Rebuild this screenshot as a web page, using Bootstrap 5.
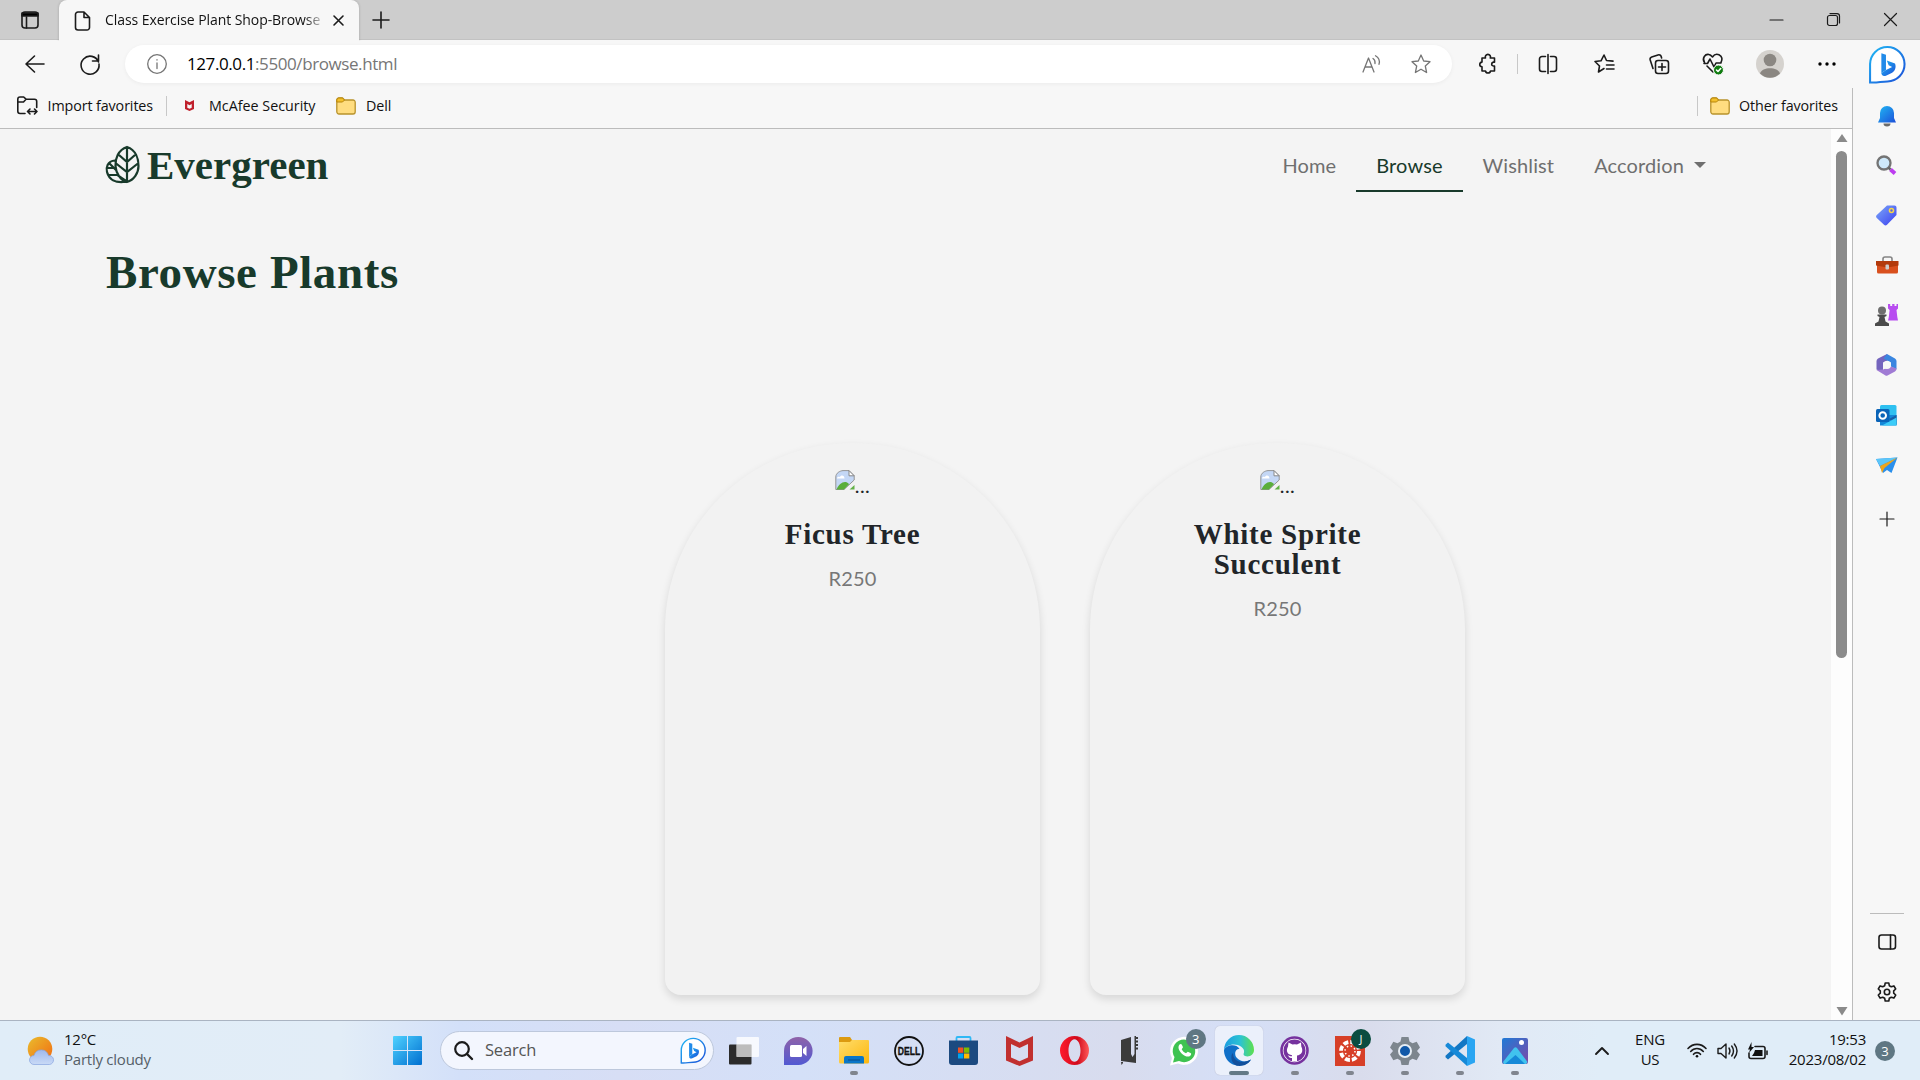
<!DOCTYPE html>
<html lang="en">
<head>
<meta charset="utf-8">
<title>Class Exercise Plant Shop-Browse</title>
<link href="https://cdn.jsdelivr.net/npm/bootstrap@5.3.0/dist/css/bootstrap.min.css" rel="stylesheet">
<script src="https://cdn.jsdelivr.net/npm/bootstrap@5.3.0/dist/js/bootstrap.bundle.min.js"></script>
<style>
body{width:1920px;height:1080px;overflow:hidden;background:#f7f7f7;font-family:"Open Sans","Noto Sans",sans-serif;color:#111;font-size:14.3px}
svg{display:block;flex:none;overflow:visible}
.ln{fill:none;stroke:#1b1b1b;stroke-width:1.6;stroke-linecap:round;stroke-linejoin:round}
.thin{stroke-width:1.2}
.gy{stroke:#757575;stroke-width:1.3}
.cell{display:flex;align-items:center;justify-content:center;flex:none}
.titlebar{height:40px;background:#cdcdcd;border-bottom:1px solid #c2c2c2}
.c40{width:40px}.c44{width:44px}.c54{width:54px}.c55w{width:55px}.c56{width:56px}.c57{width:57px}.c59{width:59px}.c63{width:63px}.c70{width:70px}
.c55{width:55.1px;height:60px;position:relative}
.tab-on{width:300px;height:41px;background:#f7f7f7;border-radius:8px 8px 0 0;padding-left:15px;margin-bottom:-1px;align-self:flex-start;box-shadow:0 0 3px #0003;clip-path:inset(0 -3px 0 -3px)}
.tab-text{width:224px;margin-left:14px;white-space:nowrap;letter-spacing:-.07px;-webkit-mask-image:linear-gradient(90deg,#000 89%,transparent 99%);font-size:14px;margin-top:-2px}
.win-ctl{margin-right:1px}
.toolbar{height:48px}
.pill{width:1327px;height:38px;border-radius:19px;background:#fff;box-shadow:0 1px 4px #0000000d;padding-left:22px;padding-right:21px;margin-left:15px}
.url{font-size:17px;letter-spacing:-.41px;margin-left:20px;color:#767676}
.url b{font-weight:400;color:#000}
.vsep{width:1px;height:20px;background:#c8c8c8;flex:none}
.favs{height:41px;border-bottom:1px solid #bcbcbc;width:1853px;border-right:1px solid #bcbcbc;padding:0 14px 5px 17px}
.favs span{white-space:nowrap;letter-spacing:-.1px}
.page-area{height:891px}
.viewport{width:1831px;background:#f4f4f4;padding:0 106px;font-family:Lato,sans-serif}
.scroller{width:22px;background:#fdfdfd;border-right:1px solid #bcbcbc}
.thumb{width:11px;height:507px;border-radius:6px;background:#8b8b8b;margin-top:8px}
.serif{font-family:"Liberation Serif",serif;font-weight:700}
.brand{font-size:41px;color:#183a2b;line-height:1;letter-spacing:0;margin-left:7px}
.site-nav{height:72px}
.site-nav .nav{margin-right:-1px}
.site-nav .nav-link{font-size:20px;letter-spacing:.12px;color:#6f6f6f;padding:10px 20px 9px;line-height:32px;border-bottom:2px solid transparent;font-weight:400}
.site-nav .nav-link.active{color:#183a2b;border-color:#183a2b}
.site-nav .dropdown-toggle::after{margin-left:10px;vertical-align:5px;border-top-width:6px;border-left-width:6px;border-right-width:6px}
.heading{font-size:47px;color:#183a2b;line-height:56px;margin:43px 0 0;letter-spacing:.6px}
.plants{margin:143px 0 0 559px;gap:50px}
.plant{width:375px;height:552px;background:#f2f2f2;border:0;border-radius:187px 187px 16px 16px;box-shadow:0 4px 8px rgba(0,0,0,.12);padding-top:27px;color:#212529}
.plant h5{font-size:29px;line-height:30px;margin:27px 0 16px;letter-spacing:.75px;padding:0 80px}
.alt{font-size:20px;height:22px}
.alt span{line-height:30px;letter-spacing:.5px}
.price{font-size:20px;line-height:26px;color:#777;letter-spacing:.15px}
.side{width:67px;background:#f7f7f7}
.side .s50{width:67px;height:50px}
.side .bell{height:52px;padding-top:4px}
.side .plus{height:58px}
.hr-s{width:34px;height:1px;background:#bcbcbc}
.taskbar{height:60px;border-top:1px solid #aab4c2;background:linear-gradient(90deg,#e0edf8 0,#e2edf7 340px,#d3e0f9 460px,#d7def5 620px,#d4e0f8 800px,#d8dcee 1120px,#d5dff7 1240px,#d9dcec 1360px,#e1e9f5 1500px,#e0edf8 1600px)}
.search{width:274px;height:39px;border-radius:20px;background:#f3f6fe;border:1px solid #bdc8dc;padding:0 7px 0 13px;margin-left:18px;margin-right:2px}
.search span{font-size:16.5px;color:#555;letter-spacing:-.2px}
.run{position:absolute;bottom:6px;left:24px;width:8px;height:4px;border-radius:2px;background:#80858e}
.edge-on{position:absolute;left:3px;top:5px;width:48px;height:49px;border-radius:5px;background:#ebf0fb;box-shadow:0 0 1px #aab}
.run.wide{left:17px;width:20px;background:#647986}
.bub{border-radius:50%;background:#5f7783;color:#fff;width:20px;height:20px;font-size:13px;line-height:20px;text-align:center;flex:none}
.bub.up{position:absolute;left:29px;top:8px}
.bub.jay{background:#0a4d40;font-size:11px}
.w-lines{font-size:15px;line-height:20px;letter-spacing:-.24px;padding-bottom:3px}
.w-lines.weather{margin-left:8px;width:329px}
.w-lines .sub{color:#555f68}
.tray{padding-right:25px}
</style>
</head>
<body>
<svg width="0" height="0" class="position-absolute">
<defs>
<linearGradient id="gb" x1="0" y1="0" x2="1" y2="1"><stop offset="0" stop-color="#20b8f4"/><stop offset="1" stop-color="#1c4fd8"/></linearGradient>
<linearGradient id="gw" x1="0" y1="0" x2="1" y2="1"><stop offset="0" stop-color="#4fd2ff"/><stop offset="1" stop-color="#006fd0"/></linearGradient>
<linearGradient id="gf" x1="0" y1="0" x2="1" y2="1"><stop offset="0" stop-color="#ffdd6b"/><stop offset="1" stop-color="#fcb70e"/></linearGradient>
<linearGradient id="gs" x1="0" y1="0" x2="1" y2="1"><stop offset="0" stop-color="#e9bd2d"/><stop offset="1" stop-color="#f26b12"/></linearGradient>
<linearGradient id="gv" x1="0" y1="0" x2="0" y2="1"><stop offset="0" stop-color="#8f62a8"/><stop offset="1" stop-color="#5159d2"/></linearGradient>
<linearGradient id="gc" x1="0" y1="0" x2="0" y2="1"><stop offset="0" stop-color="#9fb9ec"/><stop offset="1" stop-color="#c9daf6"/></linearGradient>
<linearGradient id="gp" x1="0" y1="0" x2="1" y2="1"><stop offset="0" stop-color="#1f7ad6"/><stop offset="1" stop-color="#7d4aa8"/></linearGradient>
<linearGradient id="ge" x1="0" y1="0" x2="1" y2="0"><stop offset="0" stop-color="#1b9de2"/><stop offset=".55" stop-color="#2cc3d2"/><stop offset="1" stop-color="#5ee04c"/></linearGradient>
<linearGradient id="gt" x1="0" y1="0" x2="1" y2="1"><stop offset="0" stop-color="#7ba8f8"/><stop offset="1" stop-color="#3c3ff0"/></linearGradient>
<linearGradient id="gr" x1="0" y1="0" x2="1" y2="0"><stop offset="0" stop-color="#ff1b2d"/><stop offset=".6" stop-color="#d00a1c"/><stop offset="1" stop-color="#ff5a5a"/></linearGradient>
<symbol id="folder" viewBox="0 0 20 18"><path d="M.8 3a2 2 0 0 1 2-2h3.700l2 2H17a2.200 2.200 0 0 1 2.200 2.200v9.600A2.200 2.200 0 0 1 17 17H3a2.200 2.200 0 0 1-2.200-2.200z" fill="#ffdd80" stroke="#b8922b" stroke-width="1.300"/><path d="M.8 3a2 2 0 0 1 2-2h3.700l2 2-2 2H.8z" fill="#f3c02c" stroke="#b8860b" stroke-width="1"/></symbol>
<symbol id="bing" viewBox="0 0 36 38"><path d="M1.500 36.500V18.500A16.800 16.800 0 1 1 18.500 35.500C12 35.500 9 37 1.500 36.500z" fill="#fff" stroke="url(#gb)" stroke-width="2"/><path d="M12.500 8l4.500 1.600v14.800l-4.500 3z" fill="#218be9"/><path d="M12.500 27.400l4.500-3 6-3-3.400-1.600-1.800-4.800 8 3c1.600 4-.3 7.500-2.800 9L17 30c-3 1-4.500-.7-4.500-2.600z" fill="url(#gb)"/></symbol>
<symbol id="broken" viewBox="0 0 20 20"><path d="M.8 19.500V7C.8 3 5 .8 8 .6l6 0 5.200 5.200V10L9 19.500z" fill="#c4d7f5" stroke="#949494"/><path d="M14 .6v5.200h5.200z" fill="#fff" stroke="#888"/><path d="M2 8.500c0-2 2-2 2.700-1.400C6 4.500 9.500 5 9.500 8.500z" fill="#fff"/><path d="M1.500 19.500C4 14 8 11 12 12.500c1 .5 1.700 1 2 1.700L9 19.500z" fill="#5aae3b"/><path d="M14.500 19.500l5-4.500v4.500z" fill="#63b146"/></symbol>
</defs></svg>

<header class="titlebar d-flex align-items-center">
 <div class="cell c59"><svg width="18" height="18" class="ln"><rect x="1" y="1" width="16" height="16" rx="3"/><path d="M1 2h16v3H1z" fill="#000"/><path d="M5.500 6v11"/></svg></div>
 <div class="tab-on d-flex align-items-center">
  <svg width="17" height="20" class="ln"><path d="M4 1h6l5.500 5.500V16.500a2.500 2.500 0 0 1-2.500 2.500H4a2.500 2.500 0 0 1-2.500-2.500v-13A2.500 2.500 0 0 1 4 1zM10 1v5.500h5.500"/></svg>
  <div class="tab-text">Class Exercise Plant Shop-Browse</div>
  <svg width="11" height="11" class="ln ms-1"><path d="M1 1l9 9M10 1l-9 9"/></svg>
 </div>
 <div class="cell c44"><svg width="18" height="18" class="ln"><path d="M9 1v16M1 9h16"/></svg></div>
 <div class="win-ctl ms-auto d-flex">
  <div class="cell c57"><svg width="13" height="13" class="ln thin"><path d="M0 7h13"/></svg></div>
  <div class="cell c57"><svg width="13" height="13" class="ln thin"><rect x=".5" y="2.500" width="10" height="10" rx="2"/><path d="M3 .6h7a2.500 2.500 0 0 1 2.500 2.500V10"/></svg></div>
  <div class="cell c57"><svg width="13" height="13" class="ln thin"><path d="M.5.5l12 12M12.500.5l-12 12"/></svg></div>
 </div>
</header>

<div class="toolbar d-flex align-items-center">
 <div class="cell c70"><svg width="20" height="18" class="ln"><path d="M19 9H1M9.500 1L1 9l8.500 8"/></svg></div>
 <div class="cell c40"><svg width="20" height="20" class="ln"><path d="M18.500 8A9 9 0 1 0 19 10M18.500 1v6h-6"/></svg></div>
 <div class="pill d-flex align-items-center">
  <svg width="20" height="20" class="ln gy"><circle cx="10" cy="10" r="9.300"/><path d="M10 9v5.500M10 5.700v.4"/></svg>
  <div class="url"><b>127.0.0.1</b>:5500/browse.html</div>
  <svg width="20" height="18" class="ln gy ms-auto"><path d="M1 17L6.500 3 12 17M3 12h7M11 3.500c1.600 1 2.300 2.500 2 5M13.500.8c3.500 2 4.500 5 3.500 8.500"/></svg>
  <svg width="20" height="20" class="ln gy" style="margin-left:29px"><path d="M10 1l2.700 6 6.300.7-4.700 4.300 1.300 6.500-5.600-3.300-5.600 3.300L5.700 12 1 7.700 7.300 7z"/></svg>
 </div>
 <div class="cell c63 ms-1"><svg width="18" height="20" class="ln"><path d="M3 4h3.500a2.600 2.600 0 1 1 4.800 0H15.500v4.300c-3.200-1-4.300 4.200 0 3.800V17h-4c-.5 2.700-4.500 2.700-5 0H3v-4.200c-3-.2-3-4.400 0-4.700z"/></svg></div>
 <div class="vsep" style="margin-left:-2px"></div>
 <div class="cell c59"><svg width="20" height="20" class="ln"><path d="M7.500 2.500H4a2.500 2.500 0 0 0-2.500 2.500v10A2.500 2.500 0 0 0 4 17.500h3.500M12.500 2.500H16a2.500 2.500 0 0 1 2.500 2.500v10a2.500 2.500 0 0 1-2.500 2.500h-3.500M10 .5v19"/></svg></div>
 <div class="cell c54"><svg width="20" height="20" class="ln"><path d="M10 14.500L4.500 18l1-6L1 7.500l6-.7L10 1l2.500 5.500 6.500.6M12.500 11H20M12.500 15H20"/></svg></div>
 <div class="cell c55w"><svg width="20" height="20" class="ln"><rect x="6.500" y="6.500" width="13" height="13" rx="2.500"/><path d="M13 9.500v7M9.500 13h7M4 14.500L1.200 6a2.500 2.500 0 0 1 1.500-3L9 .9a2.500 2.500 0 0 1 3.200 1.600l.4 1.500"/></svg></div>
 <div class="cell c54"><svg width="22" height="22" class="ln"><path d="M2.500 9.500C-.5 5 3.500.5 7 1.500c2 .5 3 2 3.500 2.500C11.500 2.500 14 .5 17 1.700c3.500 1.600 3.500 5 2 7.800M2 10.500h3.500L8 6l4 8 2-4h5M5 13l6 6"/><circle cx="16.500" cy="17" r="5" fill="#107c10" stroke="#f7f7f7" stroke-width="1"/><path d="M14.500 17l1.500 1.500 2.700-3" stroke="#fff"/></svg></div>
 <div class="cell c59"><svg width="28" height="28"><circle cx="14" cy="14" r="14" fill="#d5d2ce"/><circle cx="14" cy="10" r="6.300" fill="#8b8782"/><path d="M4 23.500c2-7 18-7 20 0a14 14 0 0 1-20 0z" fill="#8b8782"/></svg></div>
 <div class="cell c56"><svg width="18" height="4"><circle cx="2" cy="2" r="1.700"/><circle cx="9" cy="2" r="1.700"/><circle cx="16" cy="2" r="1.700"/></svg></div>
 <div class="cell c63"><svg width="38" height="39"><use href="#bing"/></svg></div>
</div>

<div class="d-flex">
<div>
<div class="favs d-flex align-items-center">
 <svg width="21" height="19" class="ln"><path d="M8 17.500H3A2.200 2.200 0 0 1 .8 15.300V3.200A2.200 2.200 0 0 1 3 1h3.700l2.300 2.200h8.500a2.200 2.200 0 0 1 2.200 2.200v6M.8 6H6.500l2.500-2.800M10.500 15.500h9.500M13 13l-2.500 2.500L13 18M17.500 13l2.500 2.500-2.500 2.500"/></svg>
 <span style="margin-left:9.500px;width:118.500px">Import favorites</span><div class="vsep"></div>
 <svg width="9" height="11" style="margin-left:18px"><path d="M0 0l4.500 2.300L9 0v9L4.500 11 0 9zM2.300 4v3.700l2.200 1 2.200-1V4L4.500 5.200z" fill="#c0202c" fill-rule="evenodd"/></svg>
 <span style="margin-left:15px;width:127px;letter-spacing:0">McAfee Security</span>
 <svg width="20" height="18"><use href="#folder"/></svg><span style="margin-left:10px">Dell</span>
 <div class="vsep ms-auto"></div><svg width="20" height="18" style="margin-left:12px"><use href="#folder"/></svg><span style="margin-left:9px">Other favorites</span>
</div>

<div class="page-area d-flex">
<main class="viewport">
 <nav class="site-nav d-flex align-items-center">
  <svg width="34" height="38" fill="none" stroke="#183a2b" stroke-width="2.200"><path d="M21 1C12 4 9 13 9.500 20S14 34 21 36c7-2 11.500-9 11.500-16S30 4 21 1zM21 1v35M13 9l8 7 8-7M9.500 17L21 26l11.500-9M9 14.500C1 15 0 22 1 26c2 8 9 10.500 16 10h4M1 22h8.500M3 17l7 7M3 29h8.500l8.500 6"/></svg>
  <div class="brand serif">Evergreen</div>
  <div class="nav ms-auto">
   <a class="nav-link">Home</a><a class="nav-link active">Browse</a><a class="nav-link">Wishlist</a><a class="nav-link dropdown-toggle">Accordion</a>
  </div>
 </nav>
 <h1 class="heading serif">Browse Plants</h1>
 <div class="plants d-flex">
  <div class="plant card text-center">
   <div class="alt d-flex justify-content-center"><svg width="20" height="20"><use href="#broken"/></svg><span>...</span></div>
   <h5 class="serif">Ficus Tree</h5><div class="price">R250</div>
  </div>
  <div class="plant card text-center">
   <div class="alt d-flex justify-content-center"><svg width="20" height="20"><use href="#broken"/></svg><span>...</span></div>
   <h5 class="serif">White Sprite Succulent</h5><div class="price">R250</div>
  </div>
 </div>
</main>
<div class="scroller d-flex flex-column align-items-center">
 <svg width="12" height="10" style="margin-top:4px"><path d="M6 1L11.500 9H.5z" fill="#8b8b8b"/></svg>
 <div class="thumb"></div>
 <svg width="12" height="10" class="mt-auto mb-1"><path d="M6 9.500L11.500 1H.5z" fill="#8b8b8b"/></svg>
</div>
</div>
</div>

<aside class="side d-flex flex-column align-items-center">
 <div class="cell s50 bell"><svg width="20" height="21"><path d="M10 0a7 7 0 0 1 7 7v5l2 4.500H1L3 12V7a7 7 0 0 1 7-7z" fill="url(#gb)"/><path d="M6.500 17.500h7a3.500 3 0 0 1-7 0z" fill="#6b6b6b"/></svg></div>
 <div class="cell s50"><svg width="21" height="21"><circle cx="8" cy="8" r="6.500" fill="#cfe9fa" stroke="#747474" stroke-width="2.300"/><path d="M14.500 14.500L19 18.500" stroke="#bd3df0" stroke-width="4"/><path d="M12.500 12.500l2 2" stroke="#666" stroke-width="2.500"/></svg></div>
 <div class="cell s50"><svg width="21" height="21"><path d="M11 .5h7.500a2 2 0 0 1 2 2V10L11 19.800c-1 1-2 1-3 0L.8 13c-1-1-1-2 0-3z" fill="url(#gt)"/><circle cx="15.500" cy="5.500" r="2" fill="#5a66e0" stroke="#f7d548" stroke-width="1.600"/></svg></div>
 <div class="cell s50"><svg width="22" height="18"><path d="M7 5V3a2 2 0 0 1 2-2h5a2 2 0 0 1 2 2v2" fill="none" stroke="#858585" stroke-width="1.600"/><rect x="1" y="5" width="21" height="12.500" rx="1.500" fill="#d9501e"/><path d="M0 5h22.500v4.500l-8 1.500h-6L0 9.500z" fill="#b33a0c"/><rect x="9.500" y="8.500" width="3.500" height="5" rx="1" fill="#ccc"/></svg></div>
 <div class="cell s50"><svg width="23" height="23"><path d="M13 0h2.200v2h2V0h2.300v2h2V0H23v4.500l-1.500 1.500.8 7 .7 3.500H13l.8-3.500.8-7L13 4.500z" fill="#b84df0"/><circle cx="7" cy="6.500" r="4" fill="#6e6e6e"/><path d="M2.500 10.500h9V12l-2 1 1 4.500 3.500 2V22H0v-2.500l3.500-2 1-4.500-2-1z" fill="#4b4b4b"/></svg></div>
 <div class="cell s50"><svg width="21" height="22"><path d="M11 0L2 4.500Q.5 5.500.5 7v8.500L7 18V8.500L12.500 6z" fill="#7464bd"/><path d="M11 0L19 4.500Q20.500 5.500 20.500 7v8.500L15 12.500V8.500L7.500 4.500z" fill="#3a86e0"/><path d="M20.500 14.500Q20.500 16.500 19 17.500L11.500 21.500Q10.500 22 9.500 21.500L.5 16l6.500-.5 8-3z" fill="#a07bd4"/><circle cx="11" cy="11" r="4" fill="#f7f7f7"/></svg></div>
 <div class="cell s50"><svg width="21" height="21"><rect x="4" y="0" width="16.500" height="20" rx="1.500" fill="#2ec0f0"/><path d="M4 10h16.500v10.500H4z" fill="#1287d8"/><path d="M20.500 10v10L13 14z" fill="#145fa8"/><path d="M6 20.500l14.500-8v8z" fill="#3cccf8"/><rect y="4" width="13.500" height="13" rx="1.500" fill="#0a64b8"/><circle cx="6.700" cy="10.500" r="3.300" fill="none" stroke="#fff" stroke-width="2"/></svg></div>
 <div class="cell s50"><svg width="22" height="17"><path d="M0 2L21.500.5 15.500 16l-4.500-3-4 3z" fill="#2a8fec"/><path d="M0 2L21.500.5 4 9z" fill="#5cc6f8"/><path d="M21.500.5L4 9l2 7 2.500-5z" fill="#eda51c"/></svg></div>
 <div class="cell s50 plus"><svg width="16" height="16" class="ln thin"><path d="M8 1v14M1 8h14"/></svg></div>
 <div class="hr-s mt-auto"></div>
 <div class="cell s50" style="margin-top:3px"><svg width="18" height="16" class="ln"><rect x="1" y="1" width="16.500" height="14" rx="2.500"/><path d="M12.500 1v14"/></svg></div>
 <div class="cell s50" style="margin-bottom:3px"><svg width="20" height="20" class="ln"><path d="M8.200 1h3.600l.5 2.700 2 1.100 2.600-.9 1.800 3.100-2 1.800v2.400l2 1.800-1.800 3.100-2.600-.9-2 1.100-.5 2.700H8.200l-.5-2.700-2-1.100-2.600.9L1.300 13l2-1.800V8.800L1.300 7l1.800-3.100 2.600.9 2-1.100z"/><circle cx="10" cy="10" r="2.700"/></svg></div>
</aside>
</div>

<footer class="taskbar d-flex align-items-center">
 <svg width="29" height="30" style="margin-left:27px"><circle cx="13" cy="13" r="12.300" fill="url(#gs)"/><path d="M7 28.500a4.500 4.500 0 0 1 0-9 7.500 7.500 0 0 1 14.500 0 4.500 4.500 0 0 1 1 9z" fill="url(#gc)" stroke="#86a3e0" stroke-width=".7"/></svg>
 <div class="w-lines weather">12°C<br><span class="sub">Partly cloudy</span></div>
 <svg width="29" height="29"><path d="M0 1a1 1 0 0 1 1-1h13v14H0zM15 0h13a1 1 0 0 1 1 1v13H15zM0 15h14v14H1a1 1 0 0 1-1-1zM15 15h14v13a1 1 0 0 1-1 1H15z" fill="url(#gw)"/></svg>
 <div class="search d-flex align-items-center"><svg width="19" height="19" class="ln" stroke-width="2"><circle cx="8" cy="8" r="6.800" stroke-width="2.200"/><path d="M13 13l5 5" stroke-width="2.400"/></svg><span style="margin-left:12px">Search</span><svg width="26" height="27" class="ms-auto"><use href="#bing"/></svg></div>
 <div class="cell c55"><svg width="30" height="28"><rect y="7.500" width="22.500" height="20" rx="1" fill="#2b2b2b"/><rect x="7.500" width="22.500" height="20" rx="1" fill="#fff" opacity=".8"/><rect x="7.500" y="7.500" width="15" height="12.500" fill="#b4b4b4" opacity=".75"/></svg></div>
 <div class="cell c55"><svg width="29" height="28"><path d="M0 28V14A14.300 14 0 1 1 14.500 28z" fill="url(#gv)"/><rect x="6" y="8" width="12" height="12" rx="1.500" fill="#fff"/><path d="M19 12l3.500-3v10L19 16z" fill="#fff"/></svg></div>
 <div class="cell c55"><svg width="30" height="27"><path d="M0 1a1 1 0 0 1 1-1h10l2 3v4H0z" fill="#dc9a10"/><path d="M0 5h11l2-2h16a1 1 0 0 1 1 1v21a1.500 1.500 0 0 1-1.500 1.500h-27A1.500 1.500 0 0 1 0 25z" fill="url(#gf)"/><path d="M5 26.500V21a2 2 0 0 1 2-2h16a2 2 0 0 1 2 2v5.500z" fill="#0a76c8"/><path d="M9 23h12" stroke="#0a4c88"/></svg><i class="run"></i></div>
 <div class="cell c55"><svg width="30" height="30"><circle cx="15" cy="15" r="14" fill="none" stroke="#111" stroke-width="1.800"/><text x="3.800" y="18.600" font-size="10.500" font-weight="700" fill="#111" stroke="#111" stroke-width=".3" font-family="Liberation Sans,sans-serif" textLength="22.500" lengthAdjust="spacingAndGlyphs">DELL</text></svg></div>
 <div class="cell c55"><svg width="29" height="29"><path d="M7.500 6V2a1 1 0 0 1 1-1h12a1 1 0 0 1 1 1v4" fill="none" stroke="#2fb8f5" stroke-width="1.800"/><path d="M0 4.500h29V26a3 3 0 0 1-3 3H3a3 3 0 0 1-3-3z" fill="#1c4a80"/><path d="M9 11.500h5.300v5.300H9z" fill="#f25022"/><path d="M15 11.500h5.300v5.300H15z" fill="#7fba00"/><path d="M9 17.500h5.300v5H9z" fill="#00a4ef"/><path d="M15 17.500h5.300v5H15z" fill="#ffb900"/></svg></div>
 <div class="cell c55"><svg width="27" height="30"><path d="M0 0l13.500 6.500L27 0v24.500L13.500 30 0 24.500zM5 8v13.500l8.500 3.700 8.500-3.700V8l-8.500 4z" fill="#c1302f" fill-rule="evenodd"/></svg></div>
 <div class="cell c55"><svg width="29" height="29"><path d="M14.500 0a14.500 14.500 0 1 0 0 29 14.500 14.500 0 0 0 0-29zM14.500 3.200c3.500 0 6 5 6 11.300s-2.500 11.300-6 11.300-6-5-6-11.300 2.500-11.300 6-11.300z" fill="url(#gr)" fill-rule="evenodd"/></svg></div>
 <div class="cell c55"><svg width="19" height="29"><path d="M1 4l10-3v17l1.500 3 2-3V0h1.500v27L1 25z" fill="#3b3b3b"/><path d="M17 1v13" stroke="#3b3b3b" stroke-width="2" stroke-dasharray="2 1.500"/><path d="M1 26h2v1l-1.500 2z" fill="#3b3b3b"/></svg></div>
 <div class="cell c55"><svg width="29" height="30"><path d="M0 29.500l2-7.500A14 14 0 1 1 8 27.500z" fill="#fff"/><path d="M3 26.500l1.500-5.500A11.300 11.300 0 1 1 9 25z" fill="#3fc351"/><path d="M9.500 8.500c1-1 2-.7 2.500.5l1 2.300-1.300 1.900c1 2 2.300 3.200 4.300 4.100l1.800-1.600 2.700 1.300c1 .5.800 1.500 0 2.400-2 2-5 1.300-8-1.200C9.500 15.500 7 11.500 9.500 8.500z" fill="#fff"/></svg><span class="bub up">3</span></div>
 <div class="cell c55"><i class="edge-on"></i><svg width="30" height="30" class="position-relative"><path d="M0 14A15 15 0 0 1 30 14c0 5-5 7.500-9 6-2-1-1.500-2-1-3.500C21 12 15 8.500 10 8.500 5 8.500 1 11 0 14z" fill="url(#ge)"/><path d="M0 14c2-5 12-7 15.500-1-4-1-6 5-2.500 9 4 4.500 10 4 14 1.500C22 32 6 32 1.500 21 .3 18 0 16 0 14z" fill="#0f6fc8"/><path d="M9 17c0 8 8 11.500 18 6.500C24 29 18 30.500 13 29.800 7 28 6 19 9 17z" fill="#12509c"/></svg><i class="run wide"></i></div>
 <div class="cell c55"><svg width="29" height="29"><circle cx="14.500" cy="14.500" r="13" fill="#fff" stroke="#76329e" stroke-width="2.600"/><circle cx="14.500" cy="14.500" r="11" fill="#76329e"/><path d="M8.500 6.500l4 2a10 10 0 0 1 4.500 0l4-2 .3 4c2.500 5 0 8.500-4.300 9v5.500h-5V22c-3 .5-3-2-4.500-2.500 2-.5 2.500 1 4.500.7v-1c-4.500-.7-6.500-4-4-8.700z" fill="#fff"/></svg><i class="run"></i></div>
 <div class="cell c55"><svg width="30" height="30"><rect width="30" height="30" fill="#d73f27"/><circle cx="15" cy="15" r="9" fill="none" stroke="#fff" stroke-width="3.800" stroke-dasharray="5.070 2"/><circle cx="15" cy="15" r="5" fill="none" stroke="#fff" stroke-width="1.500" stroke-dasharray="1.500 2.430"/></svg><span class="bub up jay">J</span><i class="run"></i></div>
 <div class="cell c55"><svg width="30" height="30"><path d="M11.500 1h7l1 4.500 3 1.700 4.200-1.400L30 11.500l-3 3.500 3 3.500-3.300 5.700-4.200-1.400-3 1.700-1 4.500h-7l-1-4.500-3-1.700-4.200 1.400L0 18.500 3 15l-3-3.500 3.300-5.700 4.200 1.400 3-1.700z" fill="#7d868e"/><circle cx="15" cy="15" r="6" fill="#1058a8" stroke="#e6edf4" stroke-width="2"/></svg><i class="run"></i></div>
 <div class="cell c55"><svg width="30" height="30"><path d="M22 0v8L3 23.500.5 21.300v-1.500z" fill="#1277c4"/><path d="M22 30v-8L3 6.500.5 8.700v1.500z" fill="#1689d8"/><path d="M22 0l8 3.500v23L22 30z" fill="#2aa5f2"/></svg><i class="run"></i></div>
 <div class="cell c55"><svg width="26" height="26"><rect width="26" height="26" rx="2" fill="url(#gp)"/><path d="M1 24L12 10q1.500-1.500 3 0L25.500 24 24 26H2z" fill="#41c3ee"/><path d="M3 26L13.500 17 23 26z" fill="#1689d8"/><circle cx="19.500" cy="4.500" r="2.500" fill="#fff"/></svg><i class="run"></i></div>
 <div class="tray ms-auto d-flex align-items-center">
  <svg width="14" height="8" class="ln"><path d="M1 7l6-6 6 6" stroke-width="1.900"/></svg>
  <div class="w-lines text-center" style="width:82px">ENG<br>US</div>
  <svg width="20" height="15" class="ln" style="margin-left:-4px"><path d="M1 5.500c5-5.500 13-5.500 18 0M3.700 8.500c3.500-4 9-4 12.600 0M6.500 11.300c2-2.300 5-2.300 7 0"/><circle cx="10" cy="13.300" r="1.300" fill="#111" stroke="none"/></svg>
  <svg width="21" height="16" class="ln" style="margin-left:10px"><path d="M1 5.500h3L9 1v14l-5-4.500H1zM12 5c1.300 2 1.300 4 0 6M14.700 3c2.500 3.500 2.500 6.500 0 10M17.300 1c3.500 4.500 3.500 9.500 0 14" stroke-width="1.400"/></svg>
  <svg width="21" height="18" class="ln" style="margin-left:9px"><path d="M8 4.500h8a2 2 0 0 1 2 2v8a2 2 0 0 1-2 2H4a2 2 0 0 1-2-2V11M20 9v3.500"/><path d="M8 8h7.500v6H5l2-3z" fill="#111" stroke="none"/><path d="M4.500 0L1 7.500h2L2 11l5-6H4.500z" fill="#111" stroke="none"/></svg>
  <div class="w-lines text-end" style="width:98px">19:53<br>2023/08/02</div>
  <div class="bub" style="margin-left:9px">3</div>
 </div>
</footer>
</body>
</html>
